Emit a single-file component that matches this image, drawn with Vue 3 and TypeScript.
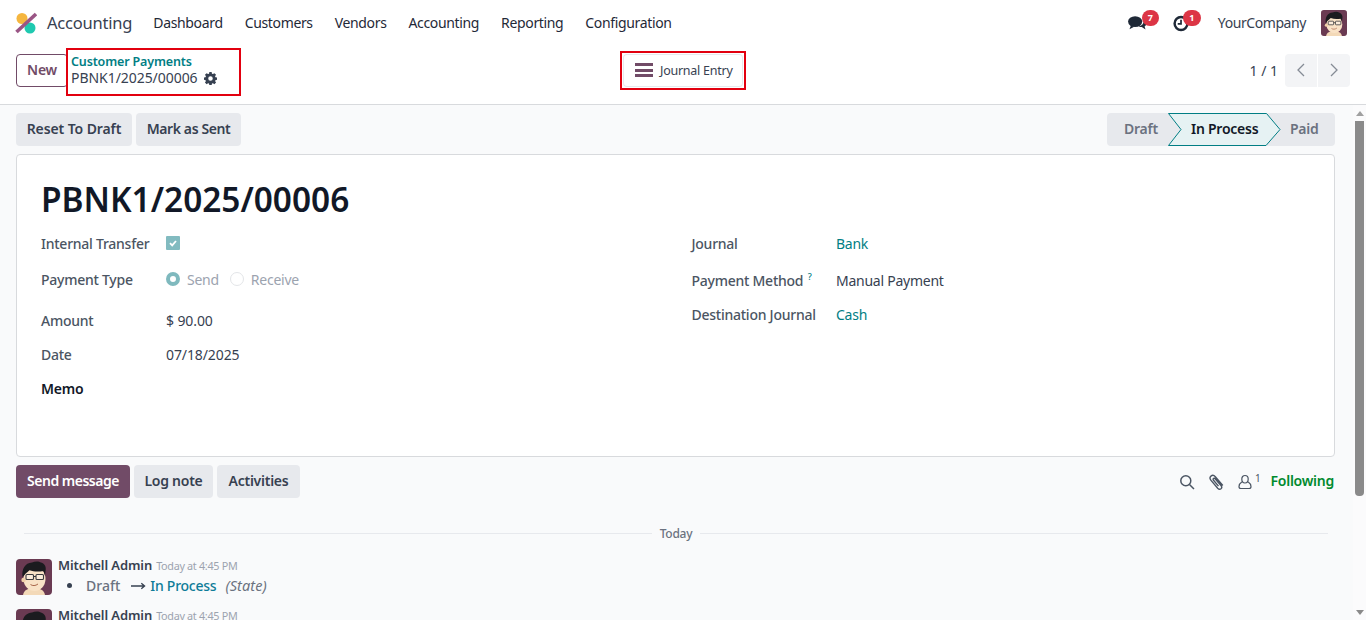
<template>
  <div class="page">
    <header class="navbar">
      <svg class="logo" viewBox="0 0 22 22" width="22" height="22">
        <circle cx="7" cy="6.500" r="5.500" fill="#f5b63f" />
        <circle cx="15" cy="16" r="5.500" fill="#1fc9b0" />
        <path d="M21 2 1.500 20" stroke="#9a5585" stroke-width="3.600" />
      </svg>
      <span class="app-name">Accounting</span>
      <nav class="menu">
        <a v-for="m in menus" :key="m">{{ m }}</a>
      </nav>
      <div class="systray">
        <span class="tray-item">
          <svg viewBox="0 0 20 18" width="19" height="17" fill="#1f2937">
            <ellipse cx="7.500" cy="7" rx="7.500" ry="5.800" />
            <path d="M3 11l-1.500 4 5-2.500z" />
            <path d="M15.600 3.400c2.600.8 4.200 2.600 4.200 4.800 0 1.600-.9 3-2.300 3.900l1 3.300-4-2.600c-1.200 0-2.400-.2-3.300-.7 3-.6 5.300-2.700 5.300-5.300 0-1.300-.3-2.500-.9-3.400z" />
          </svg>
          <b class="badge">7</b>
        </span>
        <span class="tray-item second">
          <svg viewBox="0 0 18 18" width="17" height="17" fill="none" stroke="#1f2937">
            <circle cx="8.500" cy="9" r="6.800" stroke-width="2.600" />
            <path d="M8.500 5v4.500H5" stroke-width="1.800" />
          </svg>
          <b class="badge">1</b>
        </span>
        <span class="company">YourCompany</span>
        <svg class="avatar-sm" viewBox="0 0 36 36" width="26" height="26"><use href="#face" /></svg>
      </div>
    </header>

    <section class="control">
      <div class="control-left">
        <button class="btn-new">New</button>
        <div class="crumbs">
          <a class="crumb-link">Customer Payments</a>
          <div class="crumb-current">
            <span>PBNK1/2025/00006</span>
            <svg viewBox="0 0 16 16" width="13" height="13" fill="#374151">
              <path fill-rule="evenodd" d="M6.600 0h2.800l.4 2.100 1.200.5 1.800-1.200 2 2-1.200 1.800.5 1.200 2.100.4v2.800l-2.100.4-.5 1.200 1.200 1.800-2 2-1.800-1.200-1.200.5-.4 2.100H6.600l-.4-2.100-1.200-.5-1.800 1.200-2-2 1.200-1.800-.5-1.200L-.2 9.600V6.800l2.100-.4.5-1.200-1.200-1.800 2-2 1.800 1.200 1.200-.5zM8 5.300a2.800 2.800 0 1 0 0 5.600 2.800 2.800 0 0 0 0-5.600z" />
            </svg>
          </div>
        </div>
      </div>
      <div class="stat-frame">
        <button class="stat-btn">
          <span class="bars"><i></i><i></i><i></i></span>
          <span>Journal Entry</span>
        </button>
      </div>
      <div class="pager">
        <span class="pager-text">1 / 1</span>
        <div class="pager-btns">
          <button>
            <svg viewBox="0 0 12 16" width="12" height="16" fill="none" stroke="#858b95" stroke-width="1.300"><path d="M9 2 3 8l6 6" /></svg>
          </button>
          <button>
            <svg viewBox="0 0 12 16" width="12" height="16" fill="none" stroke="#858b95" stroke-width="1.300"><path d="m3 2 6 6-6 6" /></svg>
          </button>
        </div>
      </div>
    </section>

    <div class="body-wrap">
      <main class="content">
        <div class="status-row">
          <div class="btn-group">
            <button class="btn-grey reset">Reset To Draft</button>
            <button class="btn-grey sent">Mark as Sent</button>
          </div>
          <div class="statusbar">
            <span class="st st-draft"><span>Draft</span></span>
            <span class="st st-active">
              <svg class="chev" viewBox="0 0 124 33" width="124" height="33" preserveAspectRatio="none">
                <path d="M.5.5h98L112 16.500 98 32.500H.5L13 16.500z" fill="#e6f2f3" stroke="#017e84" stroke-width="1" />
              </svg>
              <span class="st-label">In Process</span>
            </span>
            <span class="st st-paid"><span>Paid</span></span>
          </div>
        </div>

        <section class="sheet">
          <h1>PBNK1/2025/00006</h1>
          <div class="columns">
            <div class="col">
              <div class="field f-check">
                <label>Internal Transfer</label>
                <span class="checkbox">
                  <svg viewBox="0 0 14 14" width="14" height="14" fill="none" stroke="#fff" stroke-width="1.800"><path d="m4 7.200 2.200 2.200L10 5" /></svg>
                </span>
              </div>
              <div class="field f-radio">
                <label>Payment Type</label>
                <span class="radio on"></span><span class="radio-label">Send</span>
                <span class="radio off"></span><span class="radio-label">Receive</span>
              </div>
              <div class="field f-amount">
                <label>Amount</label>
                <span class="val">$ 90.00</span>
              </div>
              <div class="field f-date">
                <label>Date</label>
                <span class="val">07/18/2025</span>
              </div>
              <div class="field f-memo">
                <label class="strong">Memo</label>
              </div>
            </div>
            <div class="col right">
              <div class="field f-journal">
                <label>Journal</label>
                <a class="link">Bank</a>
              </div>
              <div class="field f-method">
                <label>Payment Method <sup>?</sup></label>
                <span>Manual Payment</span>
              </div>
              <div class="field f-dest">
                <label>Destination Journal</label>
                <a class="link">Cash</a>
              </div>
            </div>
          </div>
        </section>

        <div class="chatter-bar">
          <button class="btn-primary">Send message</button>
          <button class="btn-grey log">Log note</button>
          <button class="btn-grey act">Activities</button>
          <div class="chatter-tools">
            <svg viewBox="0 0 16 16" width="16" height="16" fill="none" stroke="#4b5563" stroke-width="1.500">
              <circle cx="6.800" cy="6.800" r="5" /><path d="m10.500 10.500 4.500 4.500" />
            </svg>
            <svg class="clip" viewBox="0 0 18 18" width="18" height="18" fill="none" stroke="#4b5563" stroke-width="1.400">
              <path d="M14.800 12.500 7.300 3.700C6 2.200 4.300 2 3 3.100 1.800 4.200 1.800 6 3 7.400l6.700 7.800c1 1.100 2.300 1.400 3.300.6 1-.9.900-2.200 0-3.300L7.100 5.700c-.5-.6-1.200-.7-1.700-.2-.5.400-.4 1.100.1 1.700l5 5.900" />
            </svg>
            <span class="followers">
              <svg viewBox="0 0 14 16" width="14" height="16" fill="none" stroke="#4b5563" stroke-width="1.200">
                <path d="M7 1.500c-2 0-3.200 1.500-3.200 3.500S5 9 7 9s3.200-2 3.200-4S9 1.500 7 1.500zM3.800 8C2.200 9 1 10.500 1 12.500c0 1.300.7 2 1.800 2h8.400c1.100 0 1.800-.7 1.800-2 0-2-1.200-3.500-2.800-4.500" />
              </svg>
              <sup>1</sup>
            </span>
            <span class="following">Following</span>
          </div>
        </div>

        <div class="today">
          <span class="line"></span>
          <span class="today-text">Today</span>
          <span class="line"></span>
        </div>

        <article v-for="(msg, i) in messages" :key="i" class="message">
          <svg class="avatar" viewBox="0 0 36 36" width="36" height="36"><use href="#face" /></svg>
          <div class="msg-body">
            <div class="msg-head">
              <b>{{ msg.author }}</b>
              <small>{{ msg.time }}</small>
            </div>
            <ul>
              <li>
                <span class="old">{{ msg.from }}</span>
                <svg viewBox="0 0 16 10" width="15" height="10" fill="none" stroke="#374151" stroke-width="1.400"><path d="M0 5h14M11 2l3.500 3-3.500 3" /></svg>
                <span class="new">{{ msg.to }}</span>
                <em>(State)</em>
              </li>
            </ul>
          </div>
        </article>
      </main>

      <div class="scrollbar">
        <span class="arrow up"></span>
        <span class="thumb"></span>
        <span class="arrow down"></span>
      </div>
    </div>

    <svg width="0" height="0" class="defs">
      <defs>
        <symbol id="face" viewBox="0 0 36 36">
          <rect width="36" height="36" rx="4" fill="#6a3a52" />
          <path d="M7 36c1-5 5-7 11-7s10 2 11 7z" fill="#f3d9b8" />
          <ellipse cx="18.500" cy="20" rx="11" ry="12" fill="#f9e2c6" />
          <circle cx="7.500" cy="21" r="2.200" fill="#f0cfa8" />
          <path d="M6.500 18C5.500 10 9 4 16 3.500c3-1.500 7-1.500 9 0 4 1 5.500 5 4.500 8.500l-.5 4.500c-.8-2-1-3.500-1.500-4.500-5 1-10 .8-14-.8-1.500 1.500-3 2.500-4 3.500-.8 1-1.800 2-2.500 3z" fill="#1b1b1f" />
          <rect x="10" y="15.500" width="7.500" height="5" rx="1" fill="#fff" fill-opacity=".35" stroke="#3a3a3e" stroke-width="1.100" />
          <rect x="20" y="15.500" width="7.500" height="5" rx="1" fill="#fff" fill-opacity=".35" stroke="#3a3a3e" stroke-width="1.100" />
          <path d="M17.500 17.500H20" stroke="#3a3a3e" stroke-width="1" />
          <path d="M14.500 25.500c2 1.500 5 1.500 7.500-.5" fill="none" stroke="#a8664a" stroke-width="1" />
        </symbol>
      </defs>
    </svg>
  </div>
</template>

<script setup lang="ts">
interface Message {
  author: string
  time: string
  from: string
  to: string
}

const menus = ['Dashboard', 'Customers', 'Vendors', 'Accounting', 'Reporting', 'Configuration']

const messages: Message[] = [
  { author: 'Mitchell Admin', time: 'Today at 4:45 PM', from: 'Draft', to: 'In Process' },
  { author: 'Mitchell Admin', time: 'Today at 4:45 PM', from: 'Draft', to: 'In Process' }
]
</script>

<style>
html, body { margin: 0; height: 100%; overflow: hidden; }
#app { height: 100%; }
</style>

<style scoped>
.page { height: 620px; display: flex; flex-direction: column; overflow: hidden; background: #fff; color: #374151; font-family: "Noto Sans", "Liberation Sans", sans-serif; font-size: 14px; letter-spacing: -0.25px; }
button { font-family: inherit; letter-spacing: inherit; cursor: pointer; white-space: nowrap; }
a { cursor: pointer; }
.defs { position: absolute; }

.navbar { height: 46px; flex: none; display: flex; align-items: center; padding: 0 19px 0 15px; box-sizing: border-box; }
.logo { margin-right: 10px; }
.app-name { font-size: 16.500px; color: #374151; margin: 0 21px 2px 0; letter-spacing: -0.2px; }
.menu { display: flex; gap: 22px; color: #1f2937; margin-bottom: 2px; letter-spacing: -0.35px; }
.systray { margin-left: auto; display: flex; align-items: center; }
.tray-item { position: relative; display: flex; }
.tray-item.second { margin-left: 26px; }
.badge { position: absolute; top: -5px; left: 14px; min-width: 17px; height: 16px; border-radius: 8px; background: #dc3545; color: #fff; font-size: 9px; line-height: 16px; text-align: center; font-weight: 700; letter-spacing: 0; }
.tray-item.second .badge { left: 10px; min-width: 18px; }
.company { margin: 0 15px 1px 28px; color: #374151; letter-spacing: -0.42px; }
.avatar-sm { display: block; }

.control { height: 59px; flex: none; display: grid; grid-template-columns: 1fr auto 1fr; align-items: center; padding: 0 16px 10px; box-sizing: border-box; border-bottom: 1px solid #d8dadd; }
.control-left { display: flex; align-items: center; }
.btn-new { width: 52px; height: 33px; padding: 0 0 2px; background: #fff; border: 1px solid #714b67; border-radius: 4px; color: #714b67; font-size: 14px; font-weight: 600; }
.crumbs { margin: 2px 0 -2px -2px; width: 175px; height: 48px; box-sizing: border-box; border: 2px solid #e2000f; padding: 4px 0 0 3px; position: relative; line-height: 16px; }
.crumb-link { display: block; font-size: 12.500px; font-weight: 600; color: #017e84; letter-spacing: -0.15px; }
.crumb-current { display: flex; align-items: center; gap: 6px; font-size: 14px; color: #374151; line-height: 16px; letter-spacing: -0.05px; }
.stat-frame { width: 126px; height: 39px; box-sizing: border-box; border: 2px solid #e2000f; padding: 2px; }
.stat-btn { width: 100%; height: 100%; padding: 0 0 0 11px; display: flex; align-items: center; gap: 7px; background: #fff; border: 0; border-radius: 3px; box-shadow: 0 0 0 1px #e7e9ed; color: #374151; font-size: 12.500px; }
.bars { display: flex; flex-direction: column; gap: 2.500px; }
.bars i { display: block; width: 18px; height: 3px; background: #714b67; }
.pager { justify-self: end; display: flex; align-items: center; gap: 7px; }
.pager-text { color: #374151; letter-spacing: 0; }
.pager-btns { display: flex; gap: 1px; }
.pager-btns button { width: 32px; height: 33px; padding: 0; border: 0; background: #f3f4f6; display: flex; align-items: center; justify-content: center; }
.pager-btns button:first-child { border-radius: 4px 0 0 4px; }
.pager-btns button:last-child { border-radius: 0 4px 4px 0; }

.body-wrap { flex: 1; min-height: 0; display: flex; background: #f9fafb; }
.content { flex: 1; min-width: 0; padding: 8px 18px 0 16px; box-sizing: border-box; overflow: hidden; }
.status-row { display: flex; justify-content: space-between; }
.btn-group { display: flex; gap: 4px; }
.btn-grey { height: 33px; padding: 0 0 2px; border: 0; border-radius: 4px; background: #e7e9ed; color: #374151; font-size: 14px; font-weight: 600; }
.btn-grey.reset { width: 116px; letter-spacing: -0.1px; }
.btn-grey.sent { width: 105px; letter-spacing: -0.4px; }
.btn-grey.log { width: 79px; }
.btn-grey.act { width: 83px; }
.statusbar { display: flex; height: 33px; width: 228px; background: #e7e9ed; border-radius: 4px; font-weight: 600; font-size: 14px; color: #6b7280; position: relative; }
.st { display: flex; align-items: center; }
.st > span { margin-bottom: 2px; }
.st-draft { width: 61px; padding-left: 17px; box-sizing: border-box; }
.st-active { width: 124px; position: relative; color: #111827; margin-right: -11px; }
.chev { position: absolute; inset: 0; }
.st-label { position: relative; margin-left: 23px; }
.st-paid { margin-left: 9px; }

.sheet { margin-top: 8px; height: 303px; box-sizing: border-box; background: #fff; border: 1px solid #d8dadd; border-radius: 4px; padding: 23px 24px 0; }
h1 { margin: 0; font-size: 33.400px; line-height: 42px; font-weight: 600; color: #111827; letter-spacing: 0; }
.columns { display: grid; grid-template-columns: 650.500px 1fr; margin-top: 13px; }
.field { display: flex; align-items: center; height: 20px; }
.field label { width: 125px; flex: none; color: #4b5563; font-weight: 500; }
.right .field label { width: 144.500px; }
.field label.strong { color: #111827; font-weight: 600; }
.field sup { font-size: 9px; color: #017e84; line-height: 0; margin-left: 1px; }
.val { letter-spacing: -0.1px; }
.f-radio { margin-top: 16px; }
.f-amount { margin-top: 21px; }
.f-date, .f-memo { margin-top: 14px; }
.f-method { margin-top: 17px; }
.f-dest { margin-top: 14px; }
.link { color: #017e84; }
.checkbox { width: 14px; height: 14px; background: #82bbc0; border-radius: 1px; display: block; }
.checkbox svg { display: block; }
.radio { width: 14px; height: 14px; border-radius: 50%; box-sizing: border-box; flex: none; }
.radio.on { border: 4px solid #7fb9be; background: #fff; }
.radio.off { border: 1px solid #e3e5e8; margin-left: 11px; }
.radio-label { color: #9ca3af; margin-left: 7px; }

.chatter-bar { margin-top: 8px; display: flex; align-items: center; gap: 4px; }
.btn-primary { width: 114px; height: 33px; padding: 0 0 2px; border: 0; border-radius: 4px; background: #714b67; color: #fff; font-size: 14px; font-weight: 600; letter-spacing: -0.5px; }
.chatter-tools { margin-left: auto; display: flex; align-items: center; color: #4b5563; }
.clip { margin-left: 13px; }
.followers { display: flex; align-items: center; margin-left: 12px; }
.followers sup { font-size: 10px; line-height: 0; margin: -8px 0 0 3px; }
.following { margin: 0 1px 2px 10px; font-weight: 600; color: #008a2e; }

.today { margin: 26px 7px 0 8px; display: flex; align-items: center; gap: 8px; height: 18px; }
.line { flex: 1; height: 1px; background: #e7e9ed; }
.today-text { font-size: 12px; font-weight: 500; color: #6b7280; }

.message { display: flex; gap: 6px; margin-top: 16px; height: 34px; }
.avatar { display: block; flex: none; margin-top: 1px; }
.msg-body { min-width: 0; }
.msg-head { line-height: 15px; margin-top: -1px; }
.msg-head b { font-size: 13px; font-weight: 600; color: #374151; letter-spacing: -0.1px; }
.msg-head small { font-size: 10.800px; color: #9ca3af; margin-left: 4px; letter-spacing: -0.3px; }
ul { margin: 3px 0 0; padding: 0 0 0 9px; line-height: 19px; list-style: none; }
li { display: flex; align-items: center; }
li::before { content: ""; width: 5px; height: 5px; border-radius: 50%; background: #374151; margin-right: 14px; flex: none; }
.old { color: #6b7280; font-weight: 500; margin-right: 11px; letter-spacing: 0; }
li svg { margin-right: 4px; flex: none; }
.new { color: #0e7c98; font-weight: 500; }
em { color: #6b7280; margin-left: 9px; letter-spacing: 0.1px; font-size: 14.500px; }

.scrollbar { width: 13px; flex: none; display: flex; flex-direction: column; align-items: center; padding-top: 6px; box-sizing: border-box; background: #fbfbfc; position: relative; }
.thumb { width: 9px; height: 375px; margin-top: 5px; background: #8a8a8a; border-radius: 0 0 4px 4px; }
.arrow { width: 0; height: 0; border-left: 4px solid transparent; border-right: 4px solid transparent; }
.arrow.up { border-bottom: 5px solid #a0a0a0; }
.arrow.down { border-top: 5px solid #8a8a8a; position: absolute; bottom: 5px; }
</style>
